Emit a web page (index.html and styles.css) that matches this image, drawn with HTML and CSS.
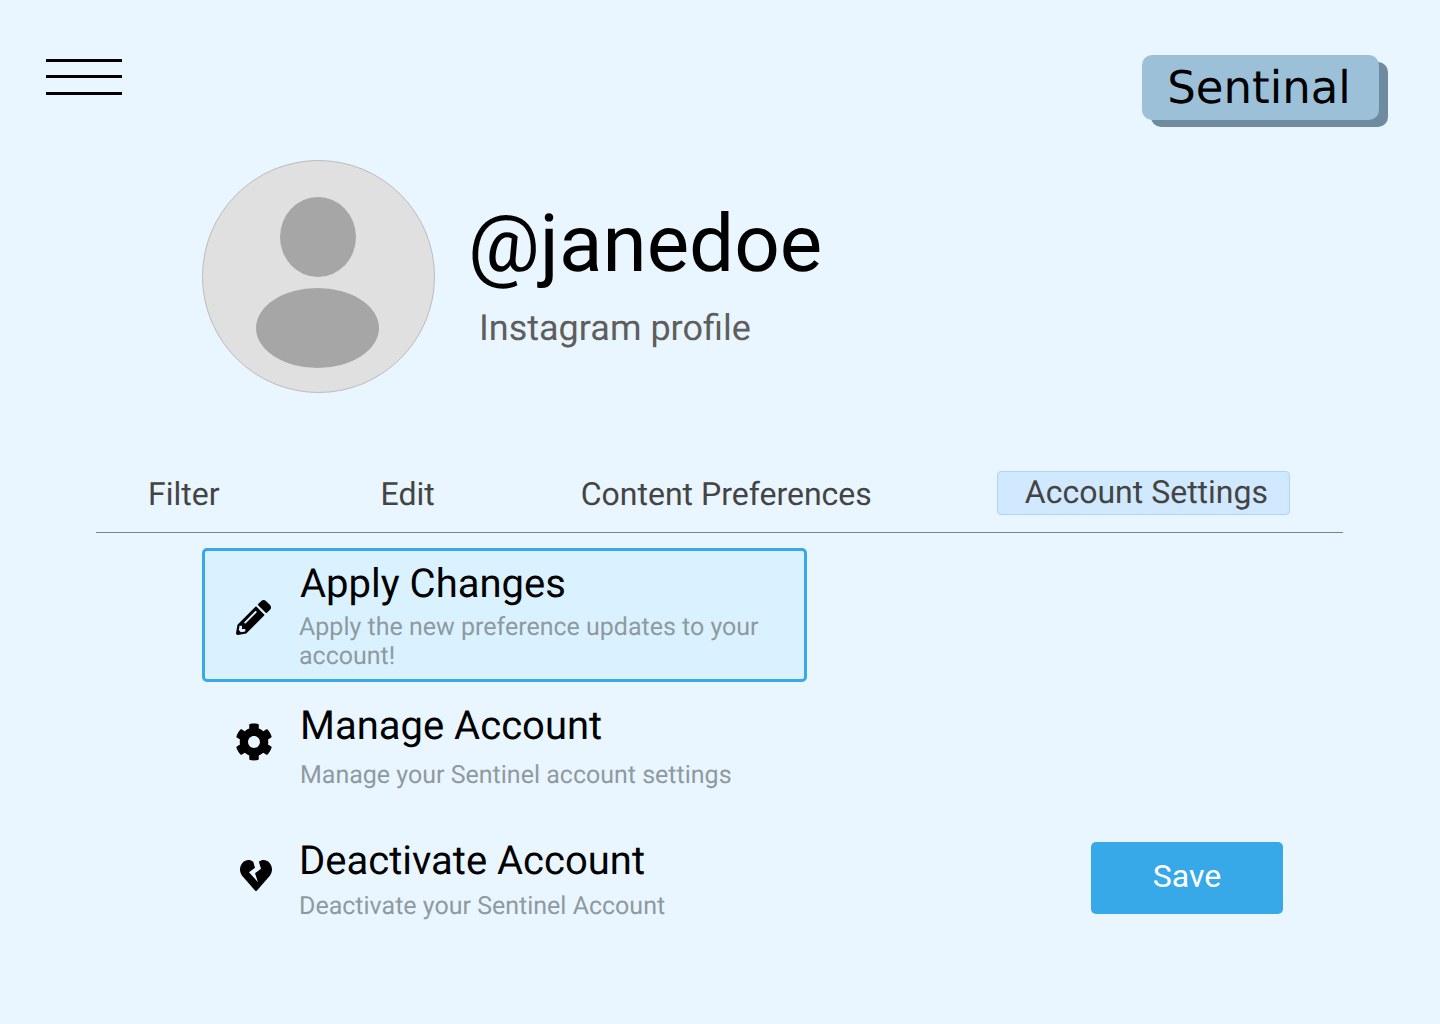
FILE: index.html
```html
<!DOCTYPE html>
<html lang="en">
<head>
<meta charset="utf-8">
<title>Sentinal - Account Settings</title>
<link rel="stylesheet" href="styles.css">
</head>
<body>
<div class="page">
  <header class="topbar">
    <button class="menu" aria-label="Menu"><span></span><span></span><span></span></button>
    <div class="brand">Sentinal</div>
  </header>
  <section class="profile">
    <svg class="avatar" viewBox="0 0 233 233" aria-hidden="true">
      <circle cx="116.500" cy="116.500" r="116" fill="#e0e0e0" stroke="#bcbcbc" stroke-width="1"/>
      <ellipse cx="116" cy="77" rx="38" ry="40" fill="#a6a6a6"/>
      <ellipse cx="115.500" cy="168" rx="61.500" ry="40" fill="#a6a6a6"/>
    </svg>
    <div class="identity">
      <h1 class="handle">@janedoe</h1>
      <p class="network">Instagram profile</p>
    </div>
  </section>
  <nav class="tabs">
    <a class="tab tab-filter">Filter</a>
    <a class="tab tab-edit">Edit</a>
    <a class="tab tab-content">Content Preferences</a>
    <a class="tab tab-account">Account Settings</a>
  </nav>
  <main class="settings">
    <ul class="options">
      <li class="option option-apply">
        <svg class="icon icon-pencil" viewBox="0 0 512 512" aria-hidden="true"><path d="M497.900 142.100l-46.100 46.100c-4.700 4.700-12.300 4.700-17 0l-111-111c-4.700-4.700-4.700-12.300 0-17l46.100-46.100c18.700-18.700 49.100-18.700 67.900 0l60.100 60.100c18.800 18.700 18.800 49.100 0 67.900zM284.200 99.800L21.600 362.400.4 483.900c-2.900 16.400 11.400 30.600 27.800 27.800l121.500-21.300 262.600-262.600c4.700-4.700 4.700-12.300 0-17l-111-111c-4.800-4.700-12.400-4.700-17.100 0zM124.100 339.900c-5.500-5.500-5.500-14.300 0-19.800l154-154c5.500-5.500 14.300-5.500 19.800 0s5.500 14.300 0 19.800l-154 154c-5.500 5.500-14.300 5.500-19.800 0zM88 424h48v36.300l-64.500 11.300-31.100-31.100L51.700 376H88v48z"/></svg>
        <div class="option-text">
          <h2 class="option-title">Apply Changes</h2>
          <p class="option-desc">Apply the new preference updates to your account!</p>
        </div>
      </li>
      <li class="option option-manage">
        <svg class="icon icon-cog" viewBox="0 0 512 512" aria-hidden="true"><path d="M487.400 315.700l-42.600-24.600c4.300-23.200 4.300-47 0-70.200l42.600-24.600c4.900-2.800 7.100-8.600 5.500-14-11.100-35.600-30-67.800-54.700-94.600-3.800-4.100-10-5.100-14.800-2.300L380.800 110c-17.900-15.400-38.500-27.300-60.800-35.100V25.800c0-5.600-3.900-10.500-9.400-11.700-36.700-8.200-74.300-7.800-109.200 0-5.500 1.200-9.400 6.100-9.400 11.700V75c-22.200 7.900-42.800 19.800-60.800 35.100L88.700 85.500c-4.900-2.800-11-1.900-14.800 2.300-24.700 26.700-43.600 58.900-54.700 94.600-1.700 5.400.6 11.200 5.500 14L67.300 221c-4.300 23.200-4.300 47 0 70.200l-42.600 24.600c-4.900 2.800-7.100 8.600-5.500 14 11.100 35.600 30 67.800 54.700 94.600 3.800 4.100 10 5.100 14.800 2.300l42.600-24.600c17.900 15.400 38.500 27.300 60.800 35.100v49.200c0 5.600 3.900 10.500 9.400 11.700 36.700 8.200 74.300 7.800 109.200 0 5.500-1.200 9.400-6.100 9.400-11.700v-49.200c22.200-7.900 42.800-19.800 60.800-35.100l42.600 24.600c4.900 2.800 11 1.900 14.800-2.300 24.700-26.700 43.600-58.900 54.700-94.600 1.500-5.500-.7-11.300-5.600-14.100zM256 336c-44.100 0-80-35.900-80-80s35.900-80 80-80 80 35.900 80 80-35.900 80-80 80z"/></svg>
        <div class="option-text">
          <h2 class="option-title">Manage Account</h2>
          <p class="option-desc">Manage your Sentinel account settings</p>
        </div>
      </li>
      <li class="option option-deactivate">
        <svg class="icon icon-heart" viewBox="0 32 512 448" preserveAspectRatio="none" aria-hidden="true"><path d="M473.700 73.800l-2.400-2.500c-46-47-118-51.700-169.600-14.800L336 159.900l-96 64 48 128-144-144 96-64-28.600-86.500C159.700 19.600 87 24 40.700 71.400l-2.400 2.400C-10.400 123.600-12.500 202.900 31 256l212.100 218.600c7.100 7.300 18.600 7.300 25.700 0L481 255.900c43.500-53 41.400-132.300-7.300-182.100z"/></svg>
        <div class="option-text">
          <h2 class="option-title">Deactivate Account</h2>
          <p class="option-desc">Deactivate your Sentinel Account</p>
        </div>
      </li>
    </ul>
    <button class="save">Save</button>
  </main>
</div>
</body>
</html>
```
FILE: styles.css
```css
* { box-sizing: border-box; }
html, body { margin: 0; padding: 0; }
body { background: #e9f6ff; font-family: Roboto, "Liberation Sans", sans-serif; color: #000; text-rendering: geometricPrecision; }
.page { width: 1440px; height: 1024px; overflow: hidden; display: flex; flex-direction: column; }

.topbar { display: flex; justify-content: space-between; align-items: flex-start; padding: 55px 52px 0 46px; height: 160px; }
.menu { display: flex; flex-direction: column; width: 76px; padding: 4px 0 0; border: 0; background: none; }
.menu span { display: block; height: 3px; margin-top: 13px; background: #000; }
.menu span:first-child { margin-top: 0; }
.menu span:last-child { margin-top: 14px; }
.brand { width: 237px; height: 65px; margin-right: 9px; padding-right: 3px; background: #9bc0d8; border-radius: 10px; box-shadow: 9px 7px 0 #6e8ba0; font-family: "DejaVu Sans", sans-serif; font-size: 45px; line-height: 65px; text-align: center; }

.profile { display: flex; align-items: flex-start; gap: 33px; margin-left: 202px; height: 311px; }
.avatar { width: 233px; height: 233px; flex: none; }
.identity { display: flex; flex-direction: column; }
.handle { margin: 34px 0 0; font-size: 80px; line-height: 100px; font-weight: 400; }
.network { margin: 6px 0 0 11px; font-size: 36px; line-height: 56px; color: #5e5e5e; }

.tabs { display: flex; align-items: flex-start; width: 1247px; height: 62px; margin-left: 96px; border-bottom: 1px solid #808080; font-size: 32px; color: #444; }
.tab { line-height: 46px; display: block; }
.tab-filter { margin-left: 52px; }
.tab-edit { margin-left: 161px; }
.tab-content { margin-left: 146px; }
.tab-account { margin-left: 125px; width: 293px; height: 44px; line-height: 40px; padding-left: 27px; background: #d0e9ff; border: 1px solid #aad6f8; border-radius: 4px; }

.settings { display: flex; align-items: flex-end; justify-content: space-between; width: 1081px; margin: 15px 0 0 202px; height: 366px; }
.options { list-style: none; margin: 0; padding: 0; width: 605px; }
.option { display: flex; border: 3px solid transparent; border-radius: 5px; }
.option-apply { height: 134px; background: #daf2ff; border-color: #38a9e8; }
.option-manage { height: 135px; margin-top: 7px; }
.option-deactivate { height: 90px; }
.icon { flex: none; }
.option-title { margin: 0; font-size: 40px; line-height: 64px; font-weight: 400; }
.option-desc { margin: 0; font-size: 25px; line-height: 29px; color: #8f9aa0; }

.icon-pencil { width: 35px; height: 35px; margin: 49px 0 0 31px; }
.option-apply .option-text { margin: 1px 0 0 29px; }
.option-apply .option-desc { margin: -3px 0 0 -1px; }

.icon-cog { width: 38px; height: 38px; margin: 31px 0 0 30px; }
.option-manage .option-text { margin: 2px 0 0 27px; }
.option-manage .option-desc { margin-top: 3px; }

.icon-heart { width: 32px; height: 31px; margin: 33px 0 0 35px; }
.option-deactivate .option-text { margin: 2px 0 0 27px; }
.option-deactivate .option-desc { margin-top: -1px; }

.save { width: 192px; height: 72px; padding: 0 0 4px; border: 0; border-radius: 5px; background: #38a9e8; color: #fff; font: 400 32px Roboto, sans-serif; }
```
